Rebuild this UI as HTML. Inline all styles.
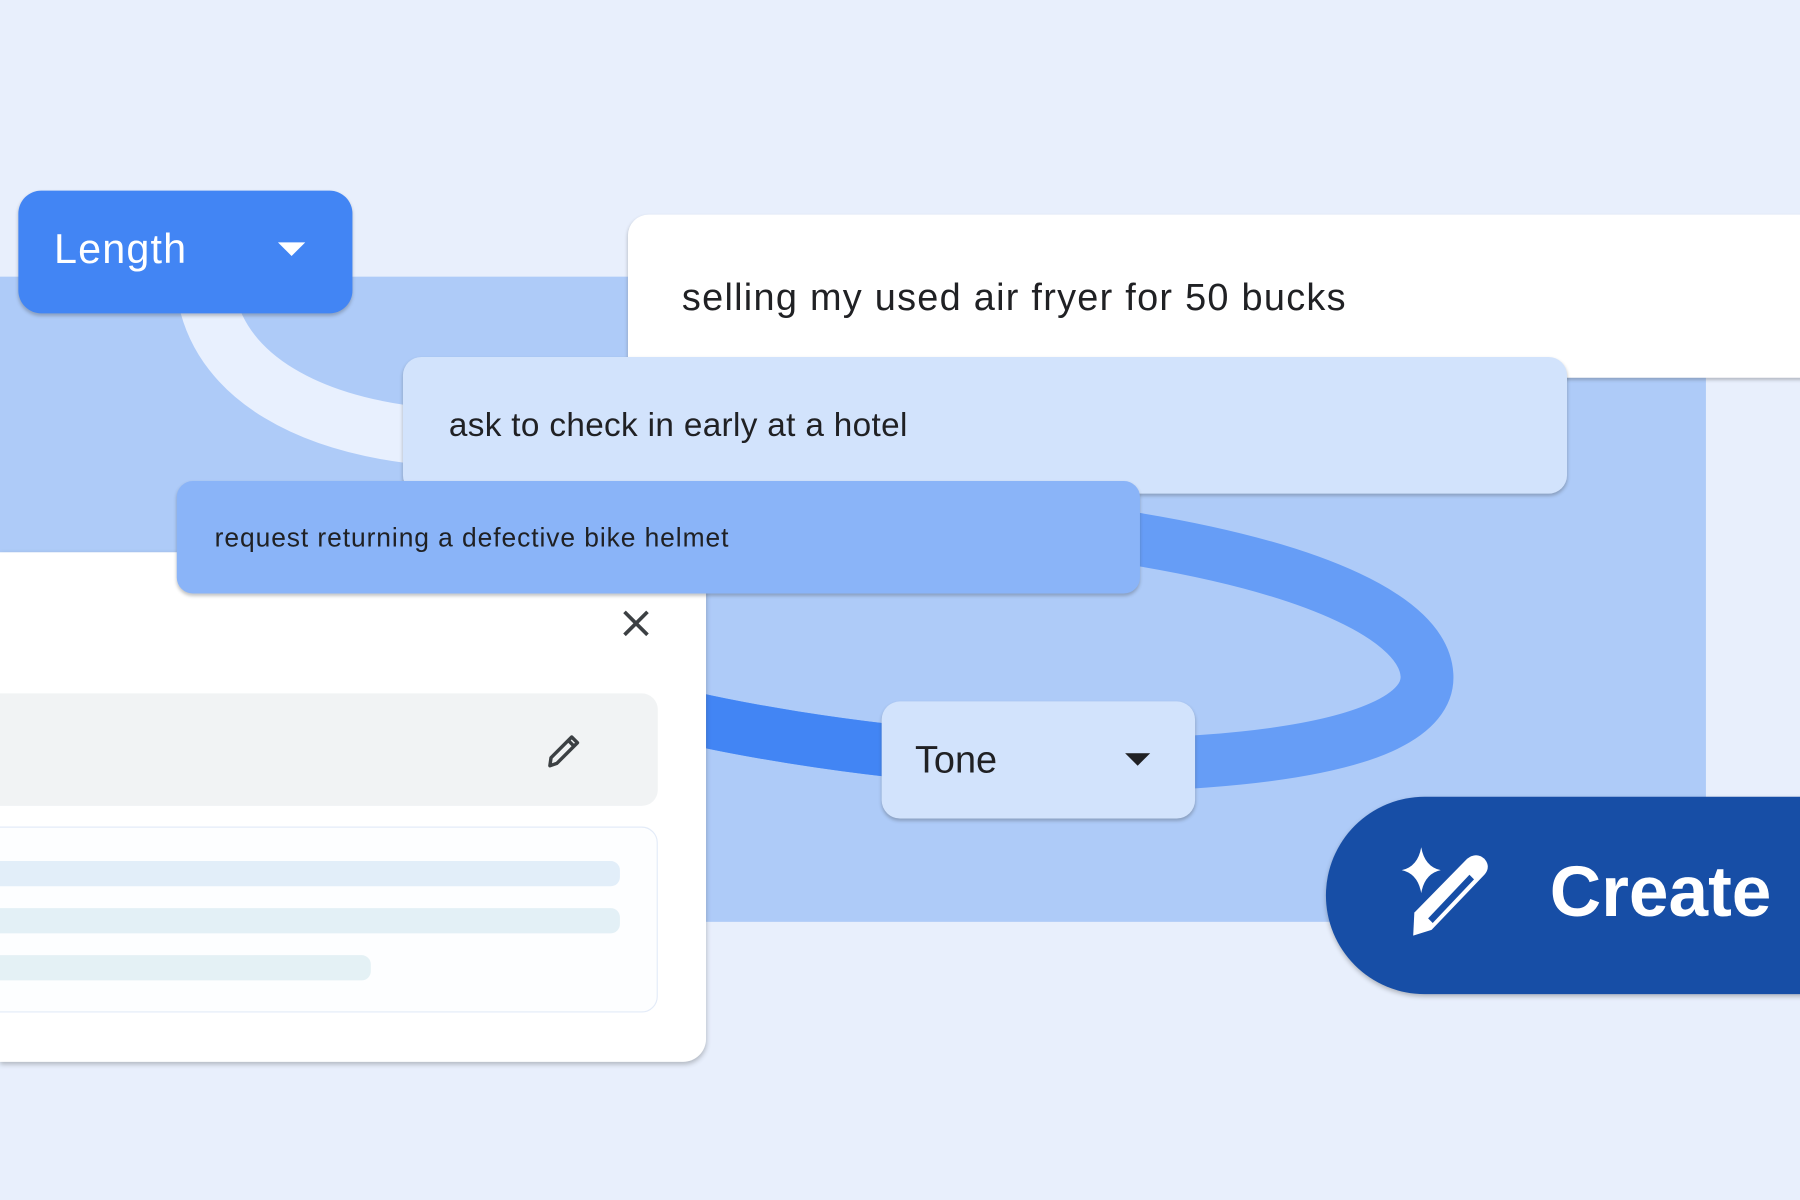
<!DOCTYPE html>
<html><head><meta charset="utf-8"><style>
html,body{margin:0;padding:0;width:1800px;height:1200px;overflow:hidden;background:#e8effc}
#s{position:absolute;left:0;top:0;width:1568px;height:1045px;transform:scale(1.148);transform-origin:0 0;font-family:"Liberation Sans",sans-serif;color:#202124}
.a{position:absolute;box-sizing:border-box;white-space:nowrap}
.sh{box-shadow:0 2px 3px rgba(60,64,67,.3)}
</style></head><body><div id="s">
<div class="a" style="left:0;top:241px;width:1486px;height:562px;background:#aecbf8"></div>
<svg class="a" style="left:0;top:0" width="1568" height="1045" viewBox="0 0 1568 1045">
<path d="M180,260 C195,330 270,370 370,380" stroke="#e8f0fe" stroke-width="50" fill="none"/>
<path d="M600,625 C700,648 900,675 1050,663 C1200,652 1245,620 1243,588 C1240,540 1150,495 980,468" stroke="#669df6" stroke-width="46" fill="none"/>
<clipPath id="c"><rect x="0" y="0" width="780" height="1045"/></clipPath>
<path clip-path="url(#c)" d="M600,625 C700,648 900,675 1050,663" stroke="#4285f4" stroke-width="46" fill="none"/>
</svg>
<div class="a sh" style="left:16px;top:166px;width:291px;height:107px;background:#4285f4;border-radius:20px"></div>
<div class="a" style="left:47px;top:196px;font-size:36px;letter-spacing:1px;color:#fff">Length</div>
<svg class="a" style="left:242px;top:211px" width="24" height="14"><path d="M0,0H24L12,12Z" fill="#fff"/></svg>
<div class="a sh" style="left:547px;top:187px;width:1100px;height:142px;background:#fff;border-radius:18px"></div>
<div class="a" style="left:594px;top:240px;font-size:33px;letter-spacing:1.1px">selling my used air fryer for 50 bucks</div>
<div class="a sh" style="left:351px;top:311px;width:1014px;height:119px;background:#d2e3fc;border-radius:16px"></div>
<div class="a" style="left:391px;top:355px;font-size:29px;letter-spacing:0.3px">ask to check in early at a hotel</div>
<div class="a" style="left:0;top:481px;width:615px;height:444px;background:#fff;border-radius:0 0 20px 0;box-shadow:0 2px 4px rgba(60,64,67,.3)"></div>
<div class="a sh" style="left:154px;top:419px;width:839px;height:98px;background:#8ab4f8;border-radius:14px"></div>
<div class="a" style="left:187px;top:455px;font-size:23px;letter-spacing:0.8px">request returning a defective bike helmet</div>
<svg class="a" style="left:542px;top:531px" width="24" height="24"><path d="M2,2L22,22M22,2L2,22" stroke="#3c4043" stroke-width="3.2"/></svg>
<div class="a" style="left:0;top:604px;width:573px;height:98px;background:#f1f3f4;border-radius:0 14px 14px 0"></div>
<svg class="a" style="left:474px;top:637px" width="34" height="34" viewBox="0 0 34 34"><path d="M5,30 L6,23 L24,5 L29,10 L11,28 Z M21,8 L26,13" stroke="#3c4043" stroke-width="3" fill="none" stroke-linejoin="round"/></svg>
<div class="a" style="left:-2px;top:720px;width:575px;height:162px;background:#fdfeff;border:1px solid #e3ebf8;border-radius:0 14px 14px 0"></div>
<div class="a" style="left:0;top:750px;width:540px;height:22px;background:#e2eef9;border-radius:0 8px 8px 0"></div>
<div class="a" style="left:0;top:791px;width:540px;height:22px;background:#e3f0f6;border-radius:0 8px 8px 0"></div>
<div class="a" style="left:0;top:832px;width:323px;height:22px;background:#e4f1f5;border-radius:0 8px 8px 0"></div>
<div class="a sh" style="left:768px;top:611px;width:273px;height:102px;background:#d2e3fc;border-radius:16px"></div>
<div class="a" style="left:797px;top:643px;font-size:33px">Tone</div>
<svg class="a" style="left:980px;top:656px" width="22" height="12"><path d="M0,0H22L11,11Z" fill="#202124"/></svg>
<div class="a" style="left:1155px;top:694px;width:500px;height:172px;background:#174ea6;border-radius:86px;box-shadow:0 2px 4px rgba(0,0,0,.25)"></div>
<svg class="a" style="left:1210px;top:730px" width="100" height="100" viewBox="1210 730 100 100">
<path d="M1238,738 Q1241,755 1255,758 Q1241,761 1238,778 Q1235,761 1221,758 Q1235,755 1238,738Z" fill="#fff"/>
<path d="M1231,815 L1232,795 L1278,748 Q1286,742 1293,748 Q1299,755 1293,762 L1247,810 Z" fill="#fff"/>
<path d="M1244,800 L1280,762 L1284,766 L1248,804 Z" fill="#174ea6"/>
</svg>
<div class="a" style="left:1350px;top:742px;font-size:62px;font-weight:bold;color:#fff">Create</div>
</div></body></html>
